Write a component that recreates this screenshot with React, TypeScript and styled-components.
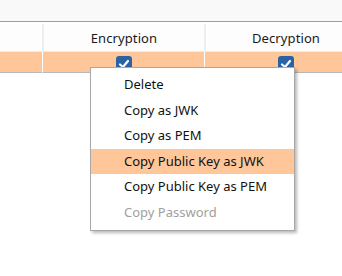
import React from 'react';
import styled, {createGlobalStyle} from 'styled-components';

const GlobalStyle = createGlobalStyle`
  html, body {
    margin: 0;
    padding: 0;
    background: #ffffff;
    font-family: "Noto Sans", "Open Sans", sans-serif;
    font-size: 13px;
    color: #111;
  }
`;

const Page = styled.div`
  position: relative;
  width: 342px;
  height: 276px;
  overflow: hidden;
  background: #ffffff;
`;

const TopStrip = styled.div`
  height: 21px;
  background: #f9f9f9;
  border-bottom: 1px solid #9c9aa6;
`;

const Grid = styled.div`
  display: grid;
  grid-template-columns: 42px 162px 162px;
`;

const HeadCell = styled.div<{first?: boolean}>`
  height: 27px;
  margin-top: 2px;
  display: flex;
  align-items: center;
  justify-content: center;
  border-left: ${p => (p.first ? 'none' : '2px solid #eeeeee')};
  background: #fdfdfd;
  color: #1a1a1a;
  letter-spacing: 0.1px;
`;

const RowCell = styled.div<{first?: boolean}>`
  height: 16px;
  border-top: 1px solid #ececec;
  border-bottom: 1px solid #b8b8b8;
  border-left: ${p => (p.first ? 'none' : '1px solid #ffffff')};
  background: #ffc799;
  display: flex;
  justify-content: center;
  padding-top: 4px;
`;

const Check = styled.div`
  width: 16px;
  height: 16px;
  border-radius: 3px;
  background: #2a63a3;
  display: flex;
  align-items: center;
  justify-content: center;
`;

const Menu = styled.ul`
  position: absolute;
  left: 90px;
  top: 67px;
  width: 203px;
  margin: 0;
  padding: 4px 0 5px;
  list-style: none;
  background: #ffffff;
  border: 1px solid #a8a8a8;
  box-shadow: 2px 2px 3px rgba(0, 0, 0, 0.28);
`;

const Item = styled.li<{active?: boolean; disabled?: boolean}>`
  height: 25.5px;
  line-height: 25px;
  padding-left: 33px;
  background: ${p => (p.active ? '#ffc699' : 'transparent')};
  color: ${p => (p.disabled ? '#a0a0a0' : '#111111')};
  white-space: nowrap;
`;

const CheckMark = () => (
  <Check>
    <svg width="12" height="12" viewBox="0 0 12 12">
      <path d="M2 6.5 L5 9 L10 3" fill="none" stroke="#fff" strokeWidth="2.2" strokeLinecap="round" strokeLinejoin="round"/>
    </svg>
  </Check>
);

const items = [
  {label: 'Delete'},
  {label: 'Copy as JWK'},
  {label: 'Copy as PEM'},
  {label: 'Copy Public Key as JWK', active: true},
  {label: 'Copy Public Key as PEM'},
  {label: 'Copy Password', disabled: true},
];

export default function App() {
  return (
    <Page>
      <GlobalStyle/>
      <TopStrip/>
      <Grid>
        <HeadCell first/>
        <HeadCell>Encryption</HeadCell>
        <HeadCell>Decryption</HeadCell>
        <RowCell first/>
        <RowCell><CheckMark/></RowCell>
        <RowCell><CheckMark/></RowCell>
      </Grid>
      <Menu>
        {items.map(it => (
          <Item key={it.label} active={it.active} disabled={it.disabled}>{it.label}</Item>
        ))}
      </Menu>
    </Page>
  );
}
